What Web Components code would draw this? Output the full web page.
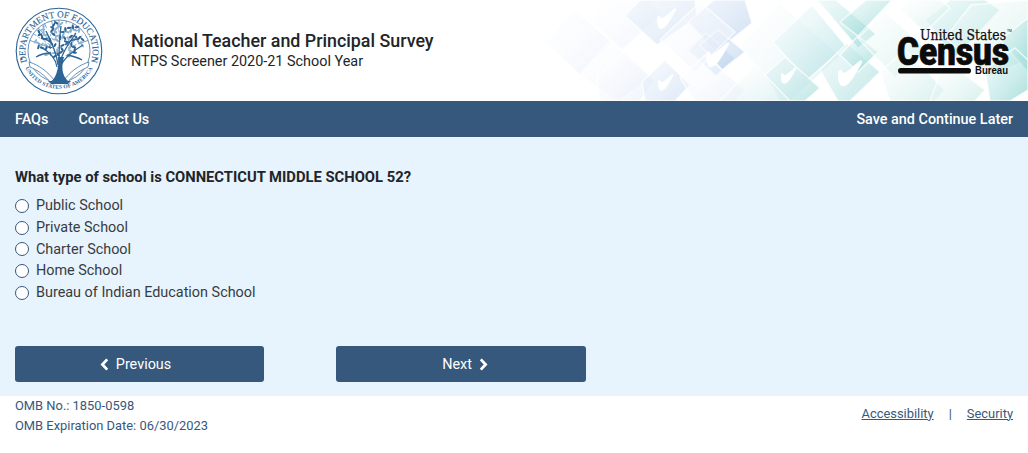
<!DOCTYPE html>
<html lang="en">
<head>
<meta charset="utf-8">
<title>National Teacher and Principal Survey</title>
<style>
  html, body { margin: 0; background: #fff; }
  body { font-family: Roboto, "Liberation Sans", sans-serif; font-size: 14.4px; color: #212529; }
</style>
</head>
<body>
<survey-header title-text="National Teacher and Principal Survey" subtitle="NTPS Screener 2020-21 School Year">
  <ed-seal slot="seal"></ed-seal>
  <census-logo slot="logo"></census-logo>
</survey-header>
<survey-nav>
  <a slot="left" href="#">FAQs</a>
  <a slot="left" href="#">Contact Us</a>
  <a slot="right" href="#">Save and Continue Later</a>
</survey-nav>
<survey-main>
  <survey-question question="What type of school is CONNECTICUT MIDDLE SCHOOL 52?">
    <radio-option label="Public School"></radio-option>
    <radio-option label="Private School"></radio-option>
    <radio-option label="Charter School"></radio-option>
    <radio-option label="Home School"></radio-option>
    <radio-option label="Bureau of Indian Education School"></radio-option>
  </survey-question>
  <nav-button slot="actions" label="Previous" dir="prev"></nav-button>
  <nav-button slot="actions" label="Next" dir="next"></nav-button>
</survey-main>
<survey-footer>
  <span slot="omb">OMB No.: 1850-0598</span>
  <span slot="omb">OMB Expiration Date: 06/30/2023</span>
</survey-footer>

<script>
class EdSeal extends HTMLElement {
  constructor() {
    super();
    this.attachShadow({ mode: "open" });
  }

  connectedCallback() {
    const blue = "#2c6496";
    // rays behind the tree
    let rays = "";
    for (let a = 200; a <= 340; a += 14) {
      const r = (a * Math.PI) / 180;
      rays += `<line x1="${44 + 10 * Math.cos(r)}" y1="${44 + 10 * Math.sin(r)}" x2="${44 + 31 * Math.cos(r)}" y2="${44 + 31 * Math.sin(r)}" stroke="${blue}" stroke-width=".6"/>`;
    }
    // leaves of the canopy, scattered on a fixed pattern
    let leaves = "";
    for (let i = 0; i < 110; i++) {
      const t = i * 2.39996;
      const d = Math.sqrt(i / 110);
      const x = 45 + 25 * d * Math.cos(t);
      const y = 33 + 18 * d * Math.sin(t);
      const rot = (i * 47) % 180;
      const fill = i % 3 === 0 ? "#fff" : i % 3 === 1 ? "#8fb2d0" : blue;
      leaves += `<ellipse cx="${x.toFixed(1)}" cy="${y.toFixed(1)}" rx="2.5" ry="1.1" transform="rotate(${rot} ${x.toFixed(1)} ${y.toFixed(1)})" fill="${fill}"/>`;
    }
    const branches = [
      "M42 60 C41 52 36 46 26 40", "M43 58 C42 48 37 36 31 24", "M44 56 C44 46 44 34 46 19",
      "M45 56 C47 46 54 36 61 26", "M46 58 C50 50 58 44 68 38", "M36 46 C31 46 26 47 21 50",
      "M52 48 C57 49 62 50 67 53", "M38 38 C35 34 32 32 26 31", "M50 38 C54 34 58 32 64 32"
    ].map((d) => `<path d="${d}" fill="none" stroke="${blue}" stroke-width="1.3"/>`).join("");
    this.shadowRoot.innerHTML = `
      <style>
        :host { display: block; width: 88px; height: 88px; flex: none; }
        svg { display: block; width: 100%; height: 100%; }
        text { font-family: "Liberation Serif", serif; fill: ${blue}; }
      </style>
      <svg viewBox="0 0 88 88" role="img" aria-label="Department of Education seal">
        <circle cx="44" cy="44" r="42.8" fill="#fff" stroke="${blue}" stroke-width="1.1"/>
        <circle cx="44" cy="44" r="31" fill="none" stroke="${blue}" stroke-width=".7"/>
        <defs>
          <path id="top" d="M44 77.6 A33.6 33.6 0 1 1 44 10.4 A33.6 33.6 0 1 1 44 77.6"/>
          <path id="bot" d="M44 6.2 A37.8 37.8 0 1 0 44 81.8 A37.8 37.8 0 1 0 44 6.2"/>
        </defs>
        <text font-size="9.1" text-anchor="middle" stroke="${blue}" stroke-width=".12"><textPath href="#top" startOffset="50%">DEPARTMENT OF EDUCATION</textPath></text>
        <text font-size="5.4" font-weight="700" text-anchor="middle" letter-spacing=".2"><textPath href="#bot" startOffset="50%">UNITED STATES OF AMERICA</textPath></text>
        <circle cx="6.6" cy="52" r="1.1" fill="${blue}"/>
        <circle cx="81.4" cy="52" r="1.1" fill="${blue}"/>
        ${rays}
        <path d="M14 55 C24 58 33 65 39 73 L35 75 C30 68 22 63 15 60 Z M74 55 C64 58 55 65 49 73 L53 75 C58 68 66 63 73 60 Z" fill="#fff" stroke="${blue}" stroke-width=".7"/>
        ${leaves}${branches}
        <path d="M43 50 C44 60 42 68 37 74 L53 74 C47 68 46 60 49 50 Z" fill="${blue}"/>
        <path d="M33 74 H56 L53 77 H36 Z" fill="${blue}"/>
      </svg>
    `;
  }
}
customElements.define("ed-seal", EdSeal);

class CensusLogo extends HTMLElement {
  constructor() {
    super();
    this.attachShadow({ mode: "open" });
  }

  connectedCallback() {
    this.shadowRoot.innerHTML = `
      <style>
        :host { display: block; width: 115px; height: 48px; }
        svg { display: block; width: 100%; height: 100%; overflow: visible; }
        text { fill: #0b0b0b; }
      </style>
      <svg viewBox="0 0 115 48" role="img" aria-label="United States Census Bureau">
        <text x="23" y="13" font-family="'DejaVu Serif', serif" font-size="14" stroke="#0b0b0b" stroke-width=".25" textLength="86" lengthAdjust="spacingAndGlyphs">United States</text>
        <text x="110" y="5" font-family="'Liberation Sans', sans-serif" font-size="3.4">TM</text>
        <text x="0" y="38" font-family="Roboto, sans-serif" font-weight="900" font-size="38" stroke="#0b0b0b" stroke-width=".7" textLength="112" lengthAdjust="spacingAndGlyphs">Census</text>
        <rect x="1" y="41" width="73" height="5.6" rx="2.8" fill="#0b0b0b"/>
        <text x="78" y="47" font-family="'Liberation Sans', sans-serif" font-weight="700" font-size="10" textLength="33" lengthAdjust="spacingAndGlyphs">Bureau</text>
      </svg>
    `;
  }
}
customElements.define("census-logo", CensusLogo);

class HeaderArt extends HTMLElement {
  constructor() {
    super();
    this.attachShadow({ mode: "open" });
  }

  connectedCallback() {
    // tiles of the artwork: points, then gradient name
    const tiles = [
      ["575,10 612,42 580,75 545,42", "a"], ["610,40 650,78 618,101 580,75", "a"],
      ["600,0 650,0 662,14 622,50 590,20", "a"], ["640,0 695,0 697,17 657,45 625,16", "b"],
      ["625,52 655,80 640,101 600,101 597,78", "a"], ["665,60 690,85 675,101 645,101 642,82", "b"],
      ["688,22 714,0 745,0 752,23 716,52", "c"], ["688,50 706,33 735,58 716,76", "c"],
      ["700,45 718,30 745,52 722,70", "c"], ["660,40 700,2 735,32 695,72", "a"],
      ["680,78 705,55 745,90 735,101 695,101", "a"], ["740,45 780,3 840,56 790,101 770,85", "d"],
      ["773,42 812,5 846,46 807,80", "e"], ["765,75 785,57 820,88 805,101 780,101", "f"],
      ["720,101 755,65 790,101", "d"], ["817,0 836,0 876,34 858,48", "g"],
      ["820,70 847,43 880,72 850,101 838,101", "f"], ["858,36 878,52 858,72 840,55", "g"],
      ["840,22 866,0 892,0 858,36", "g"], ["858,38 885,12 925,48 895,78", "h"],
      ["880,72 905,50 945,90 935,101 890,101", "h"], ["925,20 950,0 985,0 1000,10 955,58", "g"],
      ["905,0 940,0 950,8 925,32 900,10", "h"], ["971,5 1028,0 1028,60 990,75 945,38", "h"],
      ["1000,40 1028,18 1028,72", "g"], ["985,70 1015,48 1028,60 1028,90 1010,101 990,101", "g"],
      ["945,60 985,90 975,101 930,101", "h"]
    ].map(([p, g]) => `<polygon points="${p}" fill="url(#${g})" stroke="#fff" stroke-opacity=".75" stroke-width="1.4"/>`).join("");
    const check = (x, y, s) => `<path transform="translate(${x} ${y}) scale(${s})" fill="#fff" d="M0 11 C0 7 3 7 3.5 9.5 C4.5 12 9 8 18 0 L19.5 1.5 C14 11 9 21 4 21 C1 21 0 16 0 11Z"/>`;
    const grad = (id, from, to) => `<linearGradient id="${id}" x1="0" y1="0" x2="1" y2="1"><stop offset="0" stop-color="${from}" stop-opacity=".3"/><stop offset="1" stop-color="${to}" stop-opacity=".75"/></linearGradient>`;
    this.shadowRoot.innerHTML = `
      <style>
        :host { display: block; position: absolute; top: 0; right: 0; width: 488px; height: 101px; }
        svg { display: block; width: 100%; height: 100%; }
      </style>
      <svg viewBox="540 0 488 101" aria-hidden="true">
        <defs>
          ${grad("a", "#fff", "#e9f0fa")}
          ${grad("b", "#e3edf9", "#d2e1f3")}
          ${grad("c", "#d5e3f5", "#bdd3ee")}
          ${grad("d", "#fff", "#d5edf1")}
          ${grad("e", "#f2fafb", "#a8dde0")}
          ${grad("f", "#d8eff2", "#a9dedd")}
          ${grad("g", "#cfeeee", "#8fd6d2")}
          ${grad("h", "#fff", "#c8ece6")}
          <filter id="soft" x="0" y="0" width="1" height="1"><feGaussianBlur stdDeviation=".7"/></filter>
        </defs>
        <g filter="url(#soft)">
          ${tiles}
          ${check(657, 8, 1)}${check(658, 74, .8)}${check(706, 42, 1.2)}
          ${check(781, 67, .8)}${check(838, 60, 1.25)}
        </g>
      </svg>
    `;
  }
}
customElements.define("header-art", HeaderArt);

class SurveyHeader extends HTMLElement {
  constructor() {
    super();
    this.attachShadow({ mode: "open" });
  }

  connectedCallback() {
    this.shadowRoot.innerHTML = `
      <style>
        :host { display: block; position: relative; height: 101px; overflow: hidden; background: #fff; }
        .row { position: relative; display: flex; align-items: center; height: 101px; padding: 0 15px; box-sizing: border-box; }
        .titles { margin-left: 28px; flex: 1; color: #212529; }
        h1 { margin: 0; font-size: 17.85px; line-height: 21px; font-weight: 500; }
        p { margin: 1px 0 0; font-size: 14.4px; line-height: 20px; }
        .logo { margin-right: 1px; }
      </style>
      <header-art></header-art>
      <div class="row">
        <slot name="seal"></slot>
        <div class="titles">
          <h1>${this.getAttribute("title-text")}</h1>
          <p>${this.getAttribute("subtitle")}</p>
        </div>
        <div class="logo"><slot name="logo"></slot></div>
      </div>
    `;
  }
}
customElements.define("survey-header", SurveyHeader);

class SurveyNav extends HTMLElement {
  constructor() {
    super();
    this.attachShadow({ mode: "open" });
  }

  connectedCallback() {
    this.shadowRoot.innerHTML = `
      <style>
        :host { display: flex; justify-content: space-between; align-items: center; height: 36px; padding: 0 15px; background: #36587c; }
        .left { display: flex; gap: 30px; }
        ::slotted(a) { color: #fff; text-decoration: none; font-size: 14.4px; font-weight: 500; }
      </style>
      <div class="left"><slot name="left"></slot></div>
      <div><slot name="right"></slot></div>
    `;
  }
}
customElements.define("survey-nav", SurveyNav);

class SurveyMain extends HTMLElement {
  constructor() {
    super();
    this.attachShadow({ mode: "open" });
  }

  connectedCallback() {
    this.shadowRoot.innerHTML = `
      <style>
        :host { display: block; box-sizing: border-box; height: 259px; padding: 31px 15px 0; background: #e7f4fd; }
        .actions { display: grid; grid-template-columns: 249px 250px; column-gap: 72px; margin-top: 42.5px; }
      </style>
      <slot></slot>
      <div class="actions"><slot name="actions"></slot></div>
    `;
  }
}
customElements.define("survey-main", SurveyMain);

class SurveyQuestion extends HTMLElement {
  constructor() {
    super();
    this.attachShadow({ mode: "open" });
  }

  connectedCallback() {
    this.shadowRoot.innerHTML = `
      <style>
        :host { display: block; }
        .q { margin: 0 0 9px; font-size: 14.77px; line-height: 18px; font-weight: 700; color: #212529; }
        .list { display: grid; grid-auto-rows: 21.7px; }
      </style>
      <p class="q">${this.getAttribute("question")}</p>
      <div class="list" role="radiogroup"><slot></slot></div>
    `;
  }
}
customElements.define("survey-question", SurveyQuestion);

class RadioOption extends HTMLElement {
  constructor() {
    super();
    this.attachShadow({ mode: "open" });
  }

  connectedCallback() {
    this.shadowRoot.innerHTML = `
      <style>
        :host { display: flex; align-items: center; gap: 7px; font-size: 14.4px; color: #373c41; }
        .dot { box-sizing: border-box; flex: none; width: 14px; height: 14px; border: 1.5px solid #36587c; border-radius: 50%; background: #fff; }
      </style>
      <span class="dot"></span><span>${this.getAttribute("label")}</span>
    `;
  }
}
customElements.define("radio-option", RadioOption);

class NavButton extends HTMLElement {
  constructor() {
    super();
    this.attachShadow({ mode: "open" });
  }

  connectedCallback() {
    const prev = this.getAttribute("dir") === "prev";
    const chevron = `<svg width="9" height="13" viewBox="0 0 9 13" aria-hidden="true"><path d="${prev ? "M7.2 1.4 2.4 6.5 7.2 11.6" : "M1.8 1.4 6.6 6.5 1.8 11.6"}" fill="none" stroke="#fff" stroke-width="2.8"/></svg>`;
    const label = `<span>${this.getAttribute("label")}</span>`;
    this.shadowRoot.innerHTML = `
      <style>
        :host { display: flex; align-items: center; justify-content: center; gap: 7px; height: 36px; box-sizing: border-box; padding: 1px ${prev ? "8px" : "0"} 0 ${prev ? "0" : "8px"}; background: #36587c; border-radius: 3px; color: #fff; font-size: 14.4px; font-weight: 400; }
        svg { display: block; }
      </style>
      ${prev ? chevron + label : label + chevron}
    `;
  }
}
customElements.define("nav-button", NavButton);

class SurveyFooter extends HTMLElement {
  constructor() {
    super();
    this.attachShadow({ mode: "open" });
  }

  connectedCallback() {
    this.shadowRoot.innerHTML = `
      <style>
        :host { display: flex; justify-content: space-between; height: 57px; padding: 0 15px; color: #36587c; font-size: 12.9px; }
        .omb { display: grid; grid-auto-rows: 19.5px; align-content: start; align-items: center; }
        .links { display: flex; gap: 15px; height: 34px; align-items: center; }
        a { color: inherit; }
      </style>
      <div class="omb"><slot name="omb"></slot></div>
      <div class="links"><a href="#">Accessibility</a><span>|</span><a href="#">Security</a></div>
    `;
  }
}
customElements.define("survey-footer", SurveyFooter);
</script>
</body>
</html>
